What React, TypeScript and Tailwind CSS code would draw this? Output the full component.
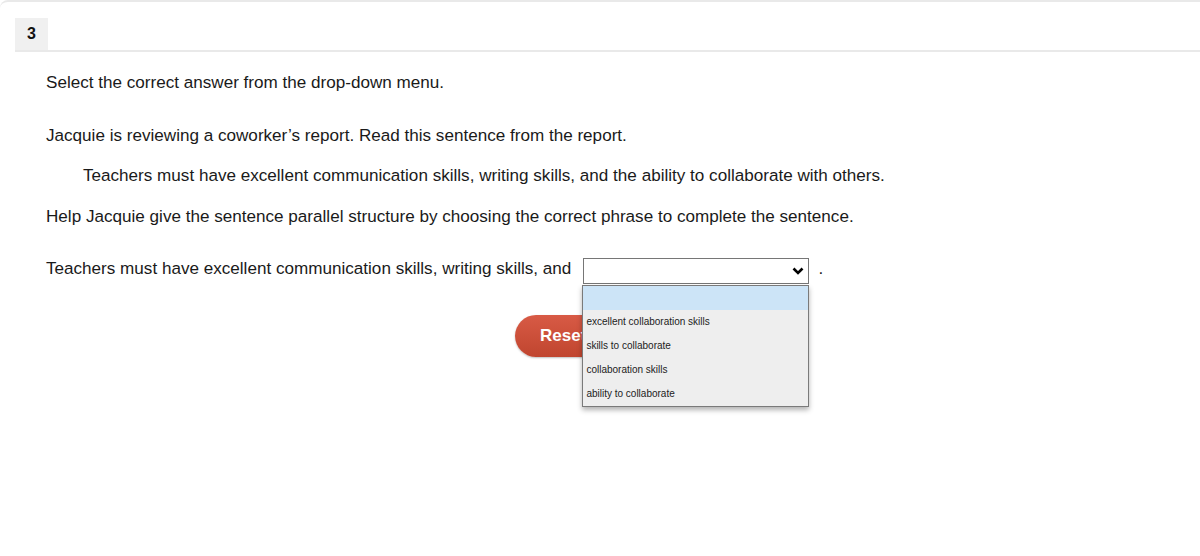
const options = [
  "excellent collaboration skills",
  "skills to collaborate",
  "collaboration skills",
  "ability to collaborate",
];

export default function App() {
  return (
    <div
      className="w-[1200px] h-[556px] bg-white text-[#1a1a1a] overflow-hidden"
      style={{ fontFamily: '"Liberation Sans", Arial, sans-serif' }}
    >
      <div className="h-full border-t-2 border-[#e9e9e9] rounded-tl-lg">
        <div className="ml-[15px] mt-4 border-b-2 border-[#e9e9e9] flex">
          <div className="w-[33px] h-[32px] bg-[#f0f0f0] flex items-center justify-center text-[16px] font-bold text-[#111]">
            3
          </div>
        </div>

        <div className="pl-[46px] pr-[46px] text-[17.1px] leading-[20px]">
          <p className="mt-[21px]">Select the correct answer from the drop-down menu.</p>
          <p className="mt-[33px]">
            Jacquie is reviewing a coworker’s report. Read this sentence from the report.
          </p>
          <p className="mt-[20px] pl-[37px]">
            Teachers must have excellent communication skills, writing skills, and the ability to
            collaborate with others.
          </p>
          <p className="mt-[21px]">
            Help Jacquie give the sentence parallel structure by choosing the correct phrase to
            complete the sentence.
          </p>

          <div className="mt-[31px] flex items-start">
            <span className="mt-[1px]">
              Teachers must have excellent communication skills, writing skills, and
            </span>
            <div className="relative ml-[12px]">
              <div className="w-[226px] h-[26px] border border-[#767676] bg-white flex items-center justify-end pr-[4px]">
                <svg width="12" height="10" viewBox="0 0 12 10">
                  <path d="M1.5 2.5 L6 7 L10.5 2.5" fill="none" stroke="#000" strokeWidth="2.6" />
                </svg>
              </div>
              <div className="absolute left-[-1px] top-[27px] w-[227px] z-10 border border-[#7a7a7a] bg-[#eeeeee] shadow-[0_3px_5px_rgba(0,0,0,0.3)] text-[10px] text-[#222]">
                <div className="h-[24px] bg-[#cce4f7]"></div>
                {options.map((o) => (
                  <div key={o} className="h-[24px] flex items-center pl-[3px]">
                    {o}
                  </div>
                ))}
              </div>
            </div>
            <span className="ml-[9px] mt-[1px]">.</span>
          </div>

          <div className="mt-[31px] pl-[469px] flex">
            <button className="h-[42px] w-[100px] pl-[25px] text-left rounded-full bg-gradient-to-b from-[#d85a45] to-[#c0452f] text-white font-bold text-[17px] shadow-[0_1px_2px_rgba(0,0,0,0.25)]">
              Reset
            </button>
          </div>
        </div>
      </div>
    </div>
  );
}
